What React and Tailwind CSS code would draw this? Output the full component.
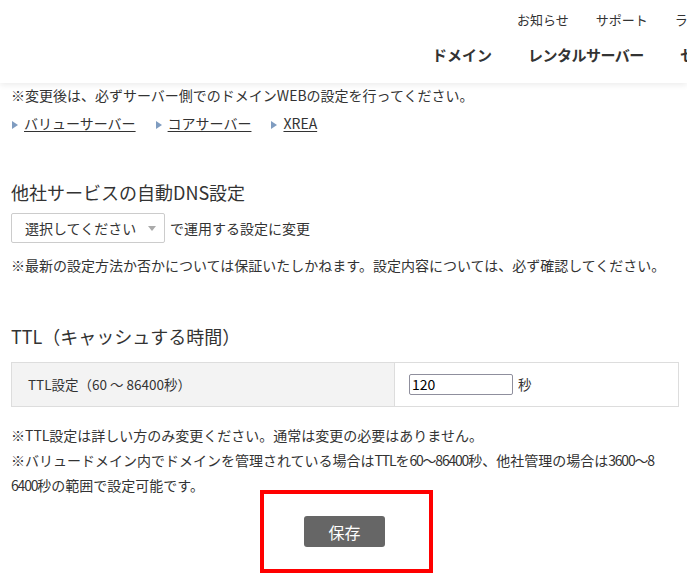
import React from 'react';

const font = { fontFamily: '"Noto Sans CJK JP", "Noto Sans", sans-serif' };

const Header = () => (
  <div className="absolute top-0 left-0 w-full h-[83px] bg-white shadow-[0_2px_6px_rgba(0,0,0,0.08)] overflow-hidden whitespace-nowrap z-10">
    <div className="flex gap-[27px] pl-[517px] pt-[10px] text-[13px] text-[#333] leading-[20px]">
      <span>お知らせ</span>
      <span>サポート</span>
      <span>ライブラリ</span>
    </div>
    <div className="flex gap-[36px] pl-[432px] pt-[15px] text-[15px] font-bold text-[#333] leading-[20px]">
      <span>ドメイン</span>
      <span className="tracking-[-0.5px]">レンタルサーバー</span>
      <span>セキュリティ</span>
    </div>
  </div>
);

const Marker = () => (
  <span className="inline-block w-0 h-0 border-y-[4px] border-y-transparent border-l-[6px] border-l-[#7f9cc0] mr-[6px] align-middle"></span>
);

const Num = ({ children }) => <span className="tracking-[-1.2px]">{children}</span>;

const App = () => {
  return (
    <div className="relative w-[687px] h-[579px] bg-white overflow-hidden text-[#333]" style={font}>
      <Header />
      <div className="px-[11px] pt-[83px] text-[14px]">
        <p className="h-[27px] leading-[25px]">※変更後は、必ずサーバー側でのドメインWEBの設定を行ってください。</p>
        <div className="flex gap-[20px] h-[26px] items-center pl-[1px]">
          <span><Marker /><a className="underline underline-offset-2">バリューサーバー</a></span>
          <span><Marker /><a className="underline underline-offset-2">コアサーバー</a></span>
          <span><Marker /><a className="underline underline-offset-2">XREA</a></span>
        </div>

        <h3 className="mt-[41px] text-[18px] leading-[30px]">他社サービスの自動DNS設定</h3>
        <div className="mt-[6px] flex items-center h-[30px]">
          <div className="h-[30px] w-[154px] border border-[#ccc] rounded-[2px] flex items-center pl-[13px] pr-[8px] justify-between">
            <span>選択してください</span>
            <span className="w-0 h-0 border-x-[4px] border-x-transparent border-t-[5px] border-t-[#aaa]"></span>
          </div>
          <span className="ml-[5px]">で運用する設定に変更</span>
        </div>
        <p className="mt-[10px] leading-[25px]">※最新の設定方法か否かについては保証いたしかねます。設定内容については、必ず確認してください。</p>

        <h3 className="mt-[43px] text-[18px] leading-[30px]">TTL（キャッシュする時間）</h3>
        <div className="mt-[11px] flex h-[45px] border border-[#ddd] w-[668px] text-[13.5px]">
          <div className="w-[383px] bg-[#f3f3f3] border-r border-[#ddd] flex items-center pl-[16px]">
            TTL設定（60 ～ 86400秒）
          </div>
          <div className="flex-1 flex items-center pl-[14px]">
            <input
              defaultValue="120"
              className="w-[104px] h-[21px] border border-[#8f8f9d] rounded-[2px] px-[2px] text-[14px] text-black outline-none"
            />
            <span className="ml-[5px]">秒</span>
          </div>
        </div>

        <div className="mt-[16px] leading-[25px] text-[14px] whitespace-nowrap">
          <p>※TTL設定は詳しい方のみ変更ください。通常は変更の必要はありません。</p>
          <p>
            ※バリュードメイン内でドメインを管理されている場合は<Num>TTL</Num>を<Num>60～86400</Num>秒、他社管理の場合は<Num>3600～8</Num>
            <br />
            <Num>6400</Num>秒の範囲で設定可能です。
          </p>
        </div>

        <div className="mt-[18px] flex justify-center pl-[2px]">
          <button className="w-[81px] h-[31px] bg-[#666] text-white text-[16px] rounded-[3px]">保存</button>
        </div>
      </div>
      <div className="absolute left-[260px] top-[490px] w-[173px] h-[83px] border-[4px] border-[#ff0000] pointer-events-none"></div>
    </div>
  );
};

export default App;
